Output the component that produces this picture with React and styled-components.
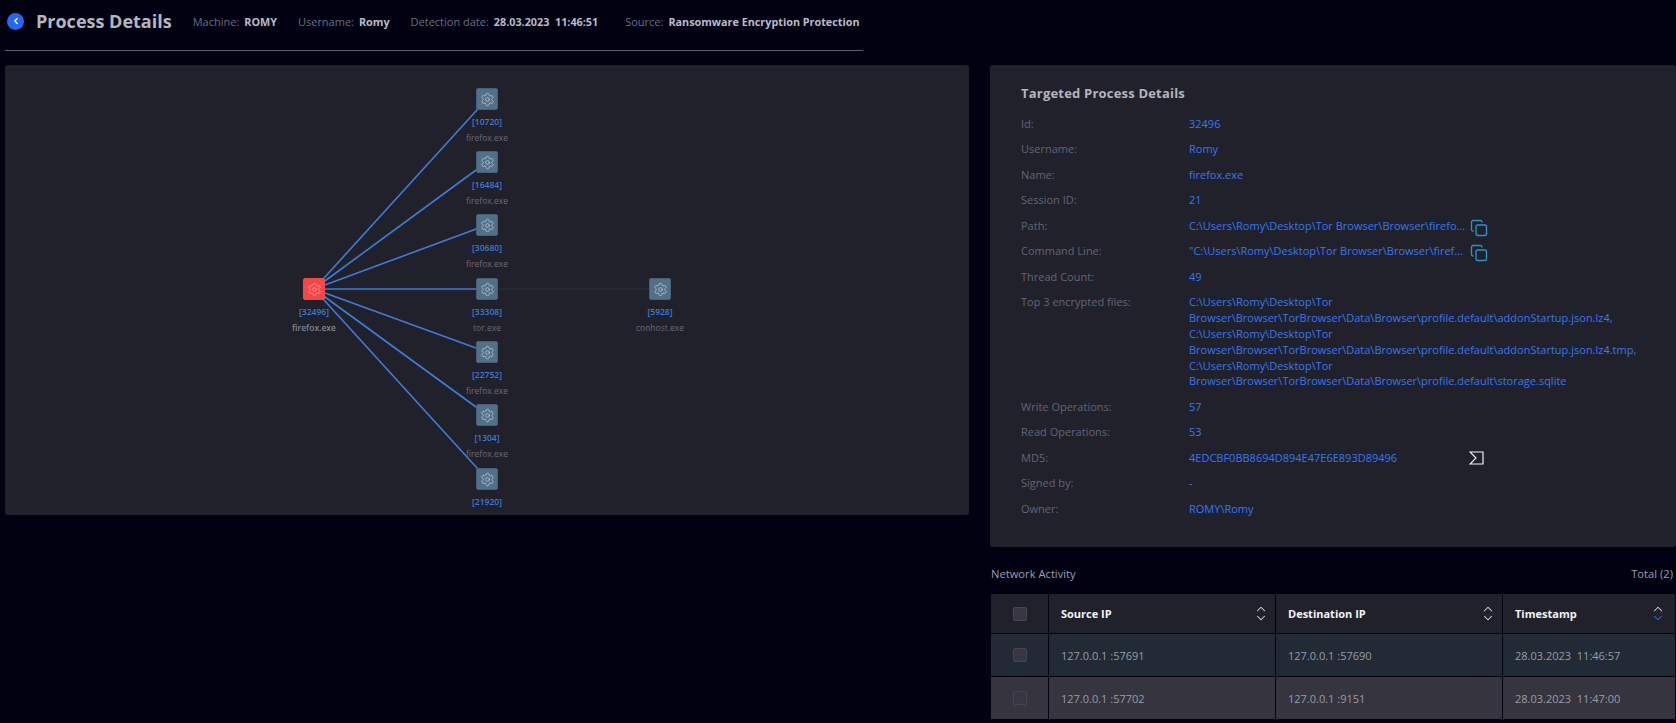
import React from "react";
import styled, { createGlobalStyle } from "styled-components";
import { ChevronLeft, ChevronUp, ChevronDown, Settings, Copy } from "lucide-react";

const GlobalStyle = createGlobalStyle`
  html, body {
    margin: 0;
    height: 100%;
    overflow: hidden;
    background: #010112;
  }
  body {
    font-family: "Open Sans", "Noto Sans", sans-serif;
  }
`;

const Page = styled.div`
  display: grid;
  grid-template-columns: 964px 686px;
  column-gap: 21px;
  padding: 0 0 0 5px;
  height: 723px;
  box-sizing: border-box;
`;

const LeftColumn = styled.div`
  display: flex;
  flex-direction: column;
`;

const RightColumn = styled.div`
  display: flex;
  flex-direction: column;
  padding-top: 65px;
`;

const Header = styled.header`
  display: flex;
  align-items: center;
  width: 858px;
  height: 51px;
  box-sizing: border-box;
  padding: 0 0 8px 2px;
  border-bottom: 1px solid #5f5f69;
  margin-bottom: 14px;
  white-space: nowrap;
`;

const BackButton = styled.span`
  display: flex;
  flex-shrink: 0;
  align-items: center;
  justify-content: center;
  width: 17px;
  height: 17px;
  border-radius: 50%;
  background: #2468f2;
  color: #fff;
  margin-right: 12px;
`;

const Title = styled.h1`
  margin: 0 21px 0 0;
  font-size: 18px;
  font-weight: 700;
  color: #b4b6c0;
`;

const Meta = styled.span`
  font-size: 11px;
  color: #6b6d85;
  margin-right: 21px;

  b {
    margin-left: 5px;
    font-size: 10.8px;
    color: #b9bbc8;
    font-weight: 700;
  }

  &:last-child {
    margin: 0 0 0 6px;
  }
`;

const GraphPanel = styled.div`
  position: relative;
  height: 450px;
  background: #20212b;
  border-radius: 3px;
  overflow: hidden;
`;

const Edges = styled.svg`
  position: absolute;
  inset: 0;
  width: 100%;
  height: 100%;
`;

const Node = styled.div`
  position: absolute;
  width: 120px;
  margin-left: -60px;
  margin-top: -11px;
  display: flex;
  flex-direction: column;
  align-items: center;
`;

const NodeBox = styled.span`
  display: flex;
  align-items: center;
  justify-content: center;
  width: 22px;
  height: 22px;
  box-sizing: border-box;
  border-radius: 2px;
  background: ${(p) => (p.$root ? "#f44848" : "#527088")};
  border: 1px solid ${(p) => (p.$root ? "#f44848" : "#46607a")};
  color: ${(p) => (p.$root ? "#f5a9a9" : "#c3ccd4")};
`;

const NodeId = styled.span`
  margin-top: 6px;
  font-size: 8.5px;
  line-height: 12px;
  font-weight: 600;
  color: #3f7ad6;
`;

const NodeName = styled.span`
  margin-top: 4px;
  font-size: 8.5px;
  line-height: 12px;
  font-weight: ${(p) => (p.$root ? 600 : 400)};
  color: ${(p) => (p.$root ? "#85858f" : "#6b6b75")};
`;

const DetailsPanel = styled.section`
  height: 482px;
  box-sizing: border-box;
  background: #20212b;
  border-radius: 3px;
  padding: 19px 0 0 31px;
`;

const DetailsTitle = styled.h2`
  margin: 0 0 14px;
  font-size: 13px;
  line-height: 18px;
  font-weight: 700;
  letter-spacing: 0.2px;
  color: #b4b5bd;
`;

const DetailRow = styled.div`
  display: grid;
  grid-template-columns: 168px 1fr;
  font-size: 11px;
  line-height: 15.8px;
  padding-bottom: 9.7px;
`;

const DetailLabel = styled.span`
  color: #63647a;
`;

const DetailValue = styled.span`
  display: flex;
  align-items: center;
  color: #3478f6;
  max-width: 450px;
`;

const Ellipsis = styled.span`
  width: 277px;
  overflow: hidden;
  white-space: nowrap;
  text-overflow: ellipsis;
`;

const CopyIcon = styled(Copy)`
  margin: -2px 0 -2px 4px;
  color: #2a93c7;
  transform: translateY(2px);
`;

const SigmaIcon = styled.svg`
  margin-left: 72px;
`;

const TableCaption = styled.div`
  display: flex;
  justify-content: space-between;
  height: 47px;
  padding: 19px 3px 0 1px;
  box-sizing: border-box;
  font-size: 11.2px;
  line-height: 16px;
  color: #9c9eb0;
`;

const Grid = styled.div`
  display: grid;
  grid-template-columns: 57px 226px 226px 1fr;
  gap: 1px;
  margin: 0 1px;
  grid-auto-rows: auto;
`;

const HeadCell = styled.div`
  display: flex;
  align-items: center;
  justify-content: ${(p) => (p.$center ? "center" : "space-between")};
  height: 39px;
  padding: ${(p) => (p.$center ? 0 : `0 ${p.$last ? 10 : 7}px 0 12px`)};
  background: #20212b;
  font-size: 11px;
  font-weight: 700;
  color: #f4f4f8;
`;

const BodyCell = styled.div`
  display: flex;
  align-items: center;
  justify-content: ${(p) => (p.$center ? "center" : "flex-start")};
  height: ${(p) => p.$h}px;
  padding: ${(p) => (p.$center ? 0 : "0 12px")};
  background: ${(p) => p.$bg};
  font-size: 11px;
  color: #9a9ca8;
`;

const Check = styled.span`
  width: 14px;
  height: 14px;
  box-sizing: border-box;
  border-radius: 2px;
  background: #373642;
  border: 1px solid #45444f;
`;

const SortIcon = styled.span`
  display: flex;
  flex-direction: column;
  color: #d8d8de;

  svg:last-child {
    margin-top: -5.5px;
    color: ${(p) => (p.$active ? "#2f72ee" : "inherit")};
  }
`;

const graph = [
  { id: 32496, name: "firefox.exe", x: 309, y: 224, root: true },
  { id: 10720, name: "firefox.exe", x: 482, y: 34 },
  { id: 16484, name: "firefox.exe", x: 482, y: 97 },
  { id: 30680, name: "firefox.exe", x: 482, y: 160 },
  { id: 33308, name: "tor.exe", x: 482, y: 224 },
  { id: 22752, name: "firefox.exe", x: 482, y: 287 },
  { id: 1304, name: "firefox.exe", x: 482, y: 350 },
  { id: 21920, x: 482, y: 414 },
  { id: 5928, name: "conhost.exe", x: 655, y: 224 },
];

const files = [
  "C:\\Users\\Romy\\Desktop\\Tor Browser\\Browser\\TorBrowser\\Data\\Browser\\profile.default\\addonStartup.json.lz4,",
  "C:\\Users\\Romy\\Desktop\\Tor Browser\\Browser\\TorBrowser\\Data\\Browser\\profile.default\\addonStartup.json.lz4.tmp,",
  "C:\\Users\\Romy\\Desktop\\Tor Browser\\Browser\\TorBrowser\\Data\\Browser\\profile.default\\storage.sqlite",
];

const network = [
  { source: "127.0.0.1 :57691", dest: "127.0.0.1 :57690", time: "28.03.2023\u00a0\u00a011:46:57", bg: "#212a35", h: 42 },
  { source: "127.0.0.1 :57702", dest: "127.0.0.1 :9151", time: "28.03.2023\u00a0\u00a011:47:00", bg: "#35343f", h: 42 },
];

function Sort({ active }) {
  return (
    <SortIcon $active={active}>
      <ChevronUp size={14} strokeWidth={1.8} />
      <ChevronDown size={14} strokeWidth={1.8} />
    </SortIcon>
  );
}

function Sigma() {
  return (
    <SigmaIcon width="15" height="14" viewBox="0 0 15 14" fill="none" stroke="#f2f2f2" strokeWidth="1.2">
      <path d="M1 1H14V13H1L7 7L1 1Z" />
    </SigmaIcon>
  );
}

function Detail({ label, children }) {
  return (
    <DetailRow>
      <DetailLabel>{label}</DetailLabel>
      <DetailValue>{children}</DetailValue>
    </DetailRow>
  );
}

export default function App() {
  const root = graph[0];
  const tor = graph[4];
  return (
    <>
      <GlobalStyle />
      <Page>
        <LeftColumn>
          <Header>
            <BackButton>
              <ChevronLeft size={10} strokeWidth={3} />
            </BackButton>
            <Title>Process Details</Title>
            <Meta>Machine:<b>ROMY</b></Meta>
            <Meta>Username:<b>Romy</b></Meta>
            <Meta>Detection date:<b>28.03.2023&nbsp;&nbsp;11:46:51</b></Meta>
            <Meta>Source:<b>Ransomware Encryption Protection</b></Meta>
          </Header>
          <GraphPanel>
            <Edges>
              {graph.slice(1, 8).map((n) => (
                <line key={n.id} x1={root.x} y1={root.y} x2={n.x} y2={n.y} stroke="#3d7ddb" strokeWidth="1.6" />
              ))}
              <line x1={tor.x} y1={tor.y} x2={graph[8].x} y2={tor.y} stroke="#282d38" strokeWidth="1.5" />
            </Edges>
            {graph.map((n) => (
              <Node key={n.id} style={{ left: n.x, top: n.y }}>
                <NodeBox $root={n.root}>
                  <Settings size={15} strokeWidth={1.2} />
                </NodeBox>
                <NodeId>[{n.id}]</NodeId>
                {n.name && <NodeName $root={n.root}>{n.name}</NodeName>}
              </Node>
            ))}
          </GraphPanel>
        </LeftColumn>
        <RightColumn>
          <DetailsPanel>
            <DetailsTitle>Targeted Process Details</DetailsTitle>
            <Detail label="Id:">32496</Detail>
            <Detail label="Username:">Romy</Detail>
            <Detail label="Name:">firefox.exe</Detail>
            <Detail label="Session ID:">21</Detail>
            <Detail label="Path:">
              <Ellipsis>C:\Users\Romy\Desktop\Tor Browser\Browser\firefox.exe</Ellipsis>
              <CopyIcon size={18} strokeWidth={1.8} />
            </Detail>
            <Detail label="Command Line:">
              <Ellipsis>"C:\Users\Romy\Desktop\Tor Browser\Browser\firefox.exe"</Ellipsis>
              <CopyIcon size={18} strokeWidth={1.8} />
            </Detail>
            <Detail label="Thread Count:">49</Detail>
            <Detail label="Top 3 encrypted files:">
              <span>{files.map((f) => <React.Fragment key={f}>{f} </React.Fragment>)}</span>
            </Detail>
            <Detail label="Write Operations:">57</Detail>
            <Detail label="Read Operations:">53</Detail>
            <Detail label="MD5:">
              4EDCBF0BB8694D894E47E6E893D89496
              <Sigma />
            </Detail>
            <Detail label="Signed by:">-</Detail>
            <Detail label="Owner:">ROMY\Romy</Detail>
          </DetailsPanel>
          <TableCaption>
            <span>Network Activity</span>
            <span>Total (2)</span>
          </TableCaption>
          <Grid>
            <HeadCell $center><Check /></HeadCell>
            <HeadCell>Source IP<Sort /></HeadCell>
            <HeadCell>Destination IP<Sort /></HeadCell>
            <HeadCell $last>Timestamp<Sort active /></HeadCell>
            {network.map((r) => (
              <React.Fragment key={r.source}>
                <BodyCell $center $bg={r.bg} $h={r.h}><Check /></BodyCell>
                <BodyCell $bg={r.bg} $h={r.h}>{r.source}</BodyCell>
                <BodyCell $bg={r.bg} $h={r.h}>{r.dest}</BodyCell>
                <BodyCell $bg={r.bg} $h={r.h}>{r.time}</BodyCell>
              </React.Fragment>
            ))}
          </Grid>
        </RightColumn>
      </Page>
    </>
  );
}
